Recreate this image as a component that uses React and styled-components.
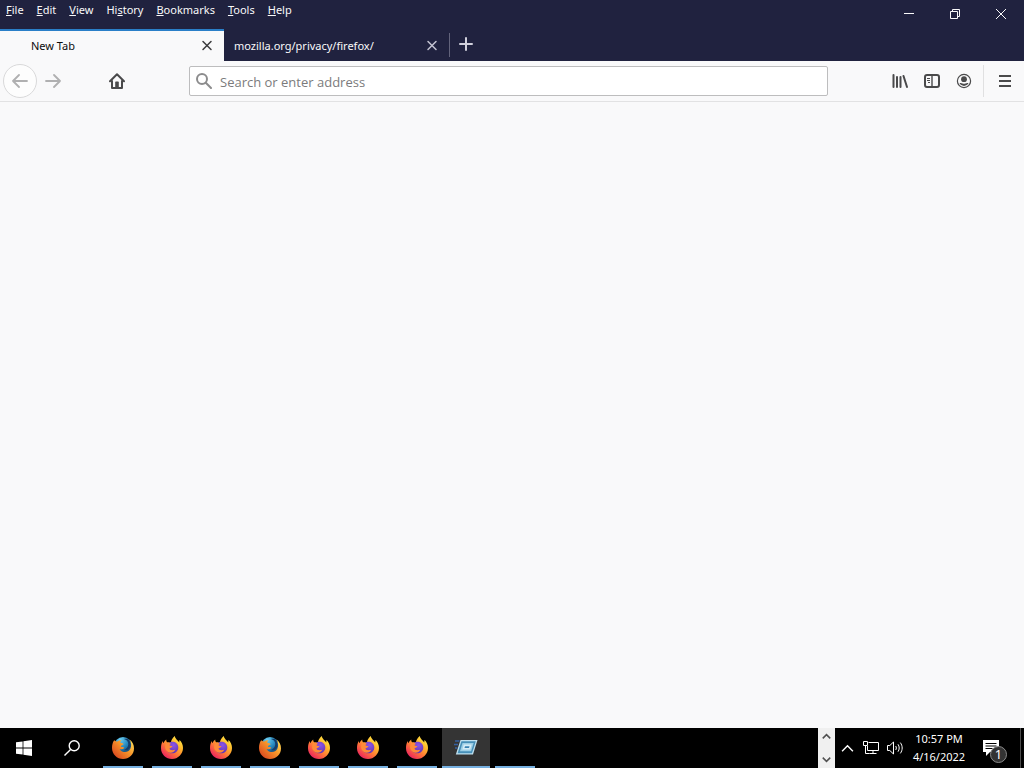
import React, { useId, useState } from 'react';
import styled, { createGlobalStyle } from 'styled-components';

const GlobalStyle = createGlobalStyle`
  * {
    box-sizing: border-box;
  }

  body {
    margin: 0;
    font-family: "Noto Sans", "Open Sans", sans-serif;
    font-size: 11px;
    line-height: 16px;
  }

  button, input {
    font: inherit;
    color: inherit;
    margin: 0;
    padding: 0;
    border: none;
    background: none;
  }

  svg {
    display: block;
    flex: none;
  }
`;

const Desktop = styled.div`
  display: flex;
  flex-direction: column;
  min-height: 100vh;
  background-color: #f9f9fa;
`;

// window frame
const TitleBar = styled.header`
  display: flex;
  justify-content: space-between;
  height: 29px;
  background-color: #20223f;
  color: #f9f9fa;
`;

const MenuBar = styled.nav`
  display: flex;
  align-items: flex-start;
  gap: 1px;
  padding-top: 2px;
`;

const MenuButton = styled.button`
  height: 16px;
  padding: 0 6px;
`;

const WindowControls = styled.div`
  display: flex;
`;

const WindowButton = styled.button`
  display: flex;
  align-items: center;
  justify-content: center;
  width: 46px;
  height: 28px;
`;

// tabs
const TabStrip = styled.div`
  display: flex;
  height: 32px;
  background-color: #20223f;
  color: #f9f9fa;
`;

const Tab = styled.div`
  display: flex;
  align-items: center;
  width: ${props => (props.$active ? 224 : 225)}px;
  padding: 0 8px 0 ${props => (props.$active ? 31 : 10)}px;
  border-top: 2px solid ${props => (props.$active ? '#2a7fc8' : 'transparent')};
  background-color: ${props => (props.$active ? '#f9f9fa' : 'transparent')};
  color: ${props => (props.$active ? '#0c0c0d' : '#f9f9fa')};
`;

const TabLabel = styled.button`
  flex: 1;
  height: 100%;
  text-align: left;
`;

const TabClose = styled.button`
  display: flex;
  padding: 2px;
  color: ${props => (props.$active ? '#3a3a3c' : '#c4c4d2')};
`;

const TabDivider = styled.div`
  width: 1px;
  margin: 4px 0;
  background-color: #62637b;
`;

const NewTabButton = styled.button`
  display: flex;
  align-items: center;
  justify-content: center;
  width: 32px;
  height: 30px;
  color: #d0d0dc;
`;

// toolbar
const Toolbar = styled.div`
  display: flex;
  align-items: center;
  height: 41px;
  padding-left: 3px;
  border-bottom: 1px solid #e2e2e3;
  background-color: #f9f9fa;
  color: #4a4a4b;
`;

const BackButton = styled.button`
  display: flex;
  align-items: center;
  justify-content: center;
  width: 34px;
  height: 34px;
  border: 1px solid #d9d9da;
  border-radius: 50%;
  background-color: #fdfdfd;
  color: #b0b0b1;
`;

const ToolButton = styled.button`
  display: flex;
  align-items: center;
  justify-content: center;
  width: 32px;
  height: 32px;
  color: ${props => (props.disabled ? '#b0b0b1' : '#4a4a4b')};
`;

const ReloadSpace = styled.div`
  width: 32px;
`;

const AddressBar = styled.label`
  display: flex;
  flex: 1;
  align-items: center;
  gap: 8px;
  height: 30px;
  margin: 0 56px;
  padding: 0 6px;
  border: 1px solid #bdbdbe;
  border-radius: 2px;
  background-color: #fff;
  color: #8c8c8d;
`;

const AddressInput = styled.input`
  flex: 1;
  min-width: 0;
  height: 24px;
  padding-top: 2px;
  font-family: "Open Sans", "Noto Sans", sans-serif;
  font-size: 13px;
  color: #0c0c0d;
  outline: none;

  &::placeholder {
    color: #7b7b7c;
    opacity: 1;
  }
`;

const AppMenu = styled.div`
  display: flex;
  justify-content: center;
  width: 41px;
  margin-left: 3px;
  padding-left: 2px;
  border-left: 1px solid #e0e0e1;
`;

const Page = styled.main`
  flex: 1;
  background-color: #f9f9fa;
`;

// taskbar
const Taskbar = styled.footer`
  display: flex;
  height: 40px;
  background-color: #000;
  color: #fff;
`;

const TaskButton = styled.button`
  display: flex;
  align-items: center;
  justify-content: center;
  width: 48px;
  height: 40px;
`;

const RunningApps = styled.div`
  display: flex;
  flex: 1;
  gap: 1px;
  padding-left: 3px;
`;

const AppButton = styled(TaskButton)`
  flex-direction: column;
  justify-content: space-between;
  padding-top: 8px;
  background-color: ${props => (props.$active ? '#343434' : 'transparent')};

  &::after {
    content: '';
    width: ${props => (props.$active ? 48 : 40)}px;
    height: 2px;
    margin-top: auto;
    background-color: #76b0e0;
  }
`;

const Scroller = styled.div`
  display: flex;
  flex-direction: column;
  justify-content: space-between;
  width: 17px;
  background-color: #f0f0f0;
  color: #505050;
`;

const ScrollButton = styled.button`
  display: flex;
  align-items: center;
  justify-content: center;
  height: 17px;
`;

const Tray = styled.div`
  display: flex;
  align-items: center;
`;

const TrayButton = styled.button`
  display: flex;
  align-items: center;
  justify-content: center;
  width: 24px;
  height: 40px;
`;

const Clock = styled.button`
  width: 64px;
  line-height: 18px;
  text-align: center;
`;

const NotificationButton = styled.button`
  position: relative;
  width: 49px;
  height: 40px;
  padding-left: 12px;
`;

const Badge = styled.span`
  position: absolute;
  right: 13px;
  bottom: 5px;
  width: 17px;
  height: 17px;
  border: 1px solid #8a8a8a;
  border-radius: 50%;
  background-color: #333;
  font-size: 13px;
  line-height: 15px;
  text-align: center;
`;

const ShowDesktop = styled.button`
  width: 4px;
  height: 40px;
  border-left: 1px solid #4c4c4c;
`;

const menus = [
  { name: 'File', before: '', accessKey: 'F', after: 'ile' },
  { name: 'Edit', before: '', accessKey: 'E', after: 'dit' },
  { name: 'View', before: '', accessKey: 'V', after: 'iew' },
  { name: 'History', before: 'Hi', accessKey: 's', after: 'tory' },
  { name: 'Bookmarks', before: '', accessKey: 'B', after: 'ookmarks' },
  { name: 'Tools', before: '', accessKey: 'T', after: 'ools' },
  { name: 'Help', before: '', accessKey: 'H', after: 'elp' },
];

const runningApps = ['classic', 'quantum', 'quantum', 'classic', 'quantum', 'quantum', 'quantum', 'run', 'blank'];

const CloseIcon = () => (
  <svg width="14" height="14" viewBox="0 0 14 14" fill="none" stroke="currentColor" strokeWidth="1.5" strokeLinecap="round">
    <path d="M3 2.500l8 8M11 2.500l-8 8" />
  </svg>
);

const ArrowIcon = ({ forward }) => (
  <svg width="16" height="16" viewBox="0 0 16 16" fill="none" stroke="currentColor" strokeWidth="1.8" strokeLinecap="round" strokeLinejoin="round">
    {forward ? <path d="M1 8h14M9 2l6 6-6 6" /> : <path d="M15 8H1M7 2L1 8l6 6" />}
  </svg>
);

const HomeIcon = () => (
  <svg width="16" height="16" viewBox="0 0 16 16" fill="none" stroke="currentColor" strokeWidth="2" strokeLinecap="round" strokeLinejoin="round">
    <path d="M1 8.2L8 1.3l7 6.9M3 8v7h10V8" />
    <path d="M6.2 15V9.5c0-.6.4-1 1-1h1.6c.6 0 1 .4 1 1V15z" fill="currentColor" stroke="none" />
  </svg>
);

const SearchIcon = () => (
  <svg width="16" height="16" viewBox="0 0 16 16" fill="none" stroke="currentColor" strokeWidth="2" strokeLinecap="round">
    <circle cx="6" cy="6" r="5" />
    <path d="M9.8 9.8L15 15" />
  </svg>
);

const LibraryIcon = () => (
  <svg width="16" height="16" viewBox="0 0 16 16" fill="none" stroke="currentColor" strokeWidth="2" strokeLinecap="round">
    <path d="M1.5 2v12M5 4v10M8.500 4v10M11.500 3l3.500 11" />
  </svg>
);

const SidebarIcon = () => (
  <svg width="16" height="16" viewBox="0 0 16 16" fill="none" stroke="currentColor">
    <rect x="1" y="2" width="14" height="12" rx="2" strokeWidth="2" />
    <path d="M8 2v12" strokeWidth="1.4" />
    <path d="M3 5.5h3M3 7.5h3M4 9.5h2" />
  </svg>
);

const AccountIcon = () => (
  <svg width="16" height="16" viewBox="0 0 16 16" fill="currentColor">
    <circle cx="8" cy="8" r="6.6" fill="none" stroke="currentColor" strokeWidth="1.2" />
    <circle cx="8" cy="6.2" r="2.9" />
    <path d="M3.5 10.1c1.3-.5 2.2 0 3 .4 1 .4 2 .4 3 0 .8-.4 1.7-.9 3-.4-.8 1.700-2.500 2.800-4.500 2.800s-3.700-1.100-4.500-2.800z" />
  </svg>
);

const MenuIcon = () => (
  <svg width="16" height="16" viewBox="0 0 16 16" fill="none" stroke="currentColor" strokeWidth="2">
    <path d="M2 3h12M2 8h12M2 13h12" />
  </svg>
);

const ClassicFirefoxIcon = () => {
  const id = useId();
  return (
    <svg width="24" height="24" viewBox="0 0 24 24">
      <defs>
        <radialGradient id={`${id}globe`} cx="0.35" cy="0.15" r="0.9">
          <stop offset="0" stopColor="#6ccdf0" />
          <stop offset="0.5" stopColor="#2386bd" />
          <stop offset="1" stopColor="#123560" />
        </radialGradient>
        <linearGradient id={`${id}fox`} x1="1" y1="0.1" x2="0.1" y2="0.9">
          <stop offset="0" stopColor="#ffe25a" />
          <stop offset="0.45" stopColor="#f7952a" />
          <stop offset="1" stopColor="#d9451f" />
        </linearGradient>
      </defs>
      <circle cx="12" cy="10" r="9" fill={`url(#${id}globe)`} />
      <path d="M13 3c2.500.6 4.500 2.500 4.300 5.500-.2 2.600-1.800 4.500-4.300 5.500 3.500 1 6-1 6.500-4 .5-3-1-6-3-7-1.200-.5-2.300-.4-3.500 0z" fill="#153c69" />
      <path d="M3 4.500C1.600 6.500 1 9 1 12c0 6.200 5 11 11 11s11-4.500 11-10.500c0-3.600-1.500-7-4.500-9 1.700 2.900 2.300 6.500.8 9.300-1.500 2.700-4.500 3.900-7.500 2.900-1.700-.6-2.800-1.700-3.200-2.700 1.700.7 3.300.1 4.800-1-.8-1.200-2-1.200-3.300-1-.6-1 .2-1.800 2.500-2.600-.2-1.300-1.600-1.500-3-1.500-.6-1 0-1.800 1-2.900-2 .1-3.300.6-4.200 1.500-1 .2-2-.3-2.400-1z" fill={`url(#${id}fox)`} />
    </svg>
  );
};

const QuantumFirefoxIcon = () => {
  const id = useId();
  return (
    <svg width="24" height="24" viewBox="0 0 24 24">
      <defs>
        <linearGradient id={`${id}fire`} x1="0.9" y1="0.05" x2="0.2" y2="0.95">
          <stop offset="0" stopColor="#fff24a" />
          <stop offset="0.35" stopColor="#ffb52b" />
          <stop offset="0.65" stopColor="#ff7139" />
          <stop offset="1" stopColor="#e92160" />
        </linearGradient>
        <radialGradient id={`${id}globe`} cx="0.6" cy="0.3" r="0.8">
          <stop offset="0" stopColor="#8a55e8" />
          <stop offset="1" stopColor="#5b2fa6" />
        </radialGradient>
      </defs>
      <path d="M14.800 0c.3 2 1.600 3.400 3 4.800l1.500 1.700c-.1-1.100 0-2 .3-2.500 2.300 2 3.400 5 3.400 8 0 6-5 11-11 11S1 18.200 1 12.200c0-3 .5-5.200 1.900-7.200 0 1 .1 1.600.4 2.200C4 6 4.900 4.600 6.200 3.600c-.1 1.100.2 2 .8 2.700 1.500-.2 2.900 0 3.900.4C11 4.500 12.500 1.800 14.800 0z" fill={`url(#${id}fire)`} />
      <path d="M10 6.200c3.400-1.300 8.300.4 8.300 5.300 0 3.500-2.800 5.800-6.300 5.800-3.400 0-5.700-2.200-5.700-5.300 0-3 1.400-4.800 3.700-5.800z" fill={`url(#${id}globe)`} />
      <path d="M5.800 7.500c2-1.300 4.200-.8 5.200.5-1 .1-1.600.8-1.300 1.500.8.5 2.300.3 2.800.8-.4 1.200-2 1.500-3 2.200.1.900.7 1.300 1.600 1.600 1.500.4 2.900-.3 4.200-.3-1 2-3.400 3.300-5.300 2.900-3-.6-5-3.100-4.900-6 .1-1.200.3-2.300.7-3.200z" fill="#ff8b38" />
    </svg>
  );
};

const RunIcon = () => (
  <svg width="24" height="24" viewBox="0 0 24 24">
    <path d="M6.500 4h17l-4.500 14.500H1.800z" fill="#bfe0ef" />
    <path d="M7.400 5.200h14.400L18 17.200H3.600z" fill="#468fb8" />
    <path d="M8.500 7.100h11.200l-2.600 8.100H6z" fill="#9ccfe6" />
    <path d="M9.800 8.600h7.900l-1.500 4.900H8.300z" fill="#d5edf7" />
    <path d="M11 10.200h4.500l-.5 1.700h-4.500z" fill="#3982b2" />
    <path d="M1 5h4.500M0 8.500h4M1 12h2.500" stroke="#355f9f" strokeWidth="1.300" />
  </svg>
);

const appIcons = {
  classic: <ClassicFirefoxIcon />,
  quantum: <QuantumFirefoxIcon />,
  run: <RunIcon />,
  blank: null,
};

const ChevronIcon = ({ down, size, weight }) => (
  <svg width={size} height={size} viewBox="0 0 12 12" fill="none" stroke="currentColor" strokeWidth={weight}>
    {down ? <path d="M1 3.500l5 5 5-5" /> : <path d="M1 8.500l5-5 5 5" />}
  </svg>
);

const App = () => {
  const [activeTab, setActiveTab] = useState(0);
  const [address, setAddress] = useState('');
  const tabs = ['New Tab', 'mozilla.org/privacy/firefox/'];

  return (
    <Desktop>
      <GlobalStyle />
      <TitleBar>
        <MenuBar aria-label="Menu bar">
          {menus.map(menu => (
            <MenuButton key={menu.name} type="button">
              {menu.before}<u>{menu.accessKey}</u>{menu.after}
            </MenuButton>
          ))}
        </MenuBar>
        <WindowControls>
          <WindowButton type="button" aria-label="Minimize">
            <svg width="10" height="10" viewBox="0 0 10 10" stroke="currentColor"><path d="M0 4.500h10" /></svg>
          </WindowButton>
          <WindowButton type="button" aria-label="Restore">
            <svg width="10" height="10" viewBox="0 0 10 10" fill="none" stroke="currentColor">
              <path d="M.5 2.500h7v7h-7zM2.500 2.500v-2h7v7h-2" />
            </svg>
          </WindowButton>
          <WindowButton type="button" aria-label="Close">
            <svg width="10" height="10" viewBox="0 0 10 10" stroke="currentColor"><path d="M0 0l10 10M10 0L0 10" /></svg>
          </WindowButton>
        </WindowControls>
      </TitleBar>

      <TabStrip>
        {tabs.map((tab, index) => (
          <Tab key={tab} $active={activeTab === index}>
            <TabLabel type="button" onClick={() => setActiveTab(index)}>{tab}</TabLabel>
            <TabClose type="button" aria-label={`Close ${tab}`} $active={activeTab === index}>
              <CloseIcon />
            </TabClose>
          </Tab>
        ))}
        <TabDivider />
        <NewTabButton type="button" aria-label="Open a new tab">
          <svg width="14" height="14" viewBox="0 0 14 14" stroke="currentColor" strokeWidth="2" strokeLinecap="round">
            <path d="M7 1v12M1 7h12" />
          </svg>
        </NewTabButton>
      </TabStrip>

      <Toolbar>
        <BackButton type="button" aria-label="Back" disabled><ArrowIcon /></BackButton>
        <ToolButton type="button" aria-label="Forward" disabled><ArrowIcon forward /></ToolButton>
        <ReloadSpace />
        <ToolButton type="button" aria-label="Home"><HomeIcon /></ToolButton>
        <AddressBar>
          <SearchIcon />
          <AddressInput
            type="text"
            aria-label="Address"
            placeholder="Search or enter address"
            value={address}
            onChange={e => setAddress(e.target.value)}
          />
        </AddressBar>
        <ToolButton type="button" aria-label="Library"><LibraryIcon /></ToolButton>
        <ToolButton type="button" aria-label="Sidebars"><SidebarIcon /></ToolButton>
        <ToolButton type="button" aria-label="Account"><AccountIcon /></ToolButton>
        <AppMenu>
          <ToolButton type="button" aria-label="Open menu"><MenuIcon /></ToolButton>
        </AppMenu>
      </Toolbar>

      <Page />

      <Taskbar>
        <TaskButton type="button" aria-label="Start">
          <svg width="16" height="16" viewBox="0 0 16 16" fill="#fff">
            <path d="M0 2.300L6.600 1.400v6.200H0zM7.400 1.300L16 0v7.600H7.400zM0 8.400h6.600v6.200L0 13.700zM7.400 8.400H16V16l-8.600-1.300z" />
          </svg>
        </TaskButton>
        <TaskButton type="button" aria-label="Search">
          <svg width="16" height="16" viewBox="0 0 16 16" fill="none" stroke="#fff" strokeWidth="1.400">
            <circle cx="10.200" cy="5.800" r="5" />
            <path d="M6.600 9.400L.5 15.500" />
          </svg>
        </TaskButton>
        <RunningApps>
          {runningApps.map((app, index) => (
            <AppButton key={index} type="button" aria-label={app} $active={app === 'run'}>
              {appIcons[app]}
            </AppButton>
          ))}
        </RunningApps>
        <Scroller>
          <ScrollButton type="button" aria-label="Scroll up"><ChevronIcon size={9} weight={2} /></ScrollButton>
          <ScrollButton type="button" aria-label="Scroll down"><ChevronIcon down size={9} weight={2} /></ScrollButton>
        </Scroller>
        <Tray>
          <TrayButton type="button" aria-label="Show hidden icons"><ChevronIcon size={13} weight={1.3} /></TrayButton>
          <TrayButton type="button" aria-label="Network">
            <svg width="17" height="16" viewBox="0 0 17 16" fill="none" stroke="#fff">
              <path d="M5.500 2.500h10v8h-11V6M10 10.500v3M6.500 13.500h7" />
              <path d="M.5 1.500h4v4h-4zM2.500 5.500v8h4" />
            </svg>
          </TrayButton>
          <TrayButton type="button" aria-label="Volume">
            <svg width="17" height="16" viewBox="0 0 17 16" fill="none" stroke="#fff">
              <path d="M.5 5.500h2.300L6.500 2v12l-3.700-3.500H.5z" />
              <path d="M8.700 6c.8 1.200.8 2.800 0 4M11 4.300c1.600 2.200 1.600 5.200 0 7.400M13.300 2.600c2.500 3.200 2.500 7.600 0 10.800" />
            </svg>
          </TrayButton>
          <Clock type="button">
            10:57 PM<br />4/16/2022
          </Clock>
          <NotificationButton type="button" aria-label="Notifications, 1 new">
            <svg width="16" height="16" viewBox="0 0 16 16">
              <path d="M0 0h16v12H7l-4 4v-4H0z" fill="#fff" />
              <path d="M2.500 3.500h11M2.500 6h11M2.500 8.500h7" stroke="#000" />
            </svg>
            <Badge>1</Badge>
          </NotificationButton>
          <ShowDesktop type="button" aria-label="Show desktop" />
        </Tray>
      </Taskbar>
    </Desktop>
  );
};

export default App;
